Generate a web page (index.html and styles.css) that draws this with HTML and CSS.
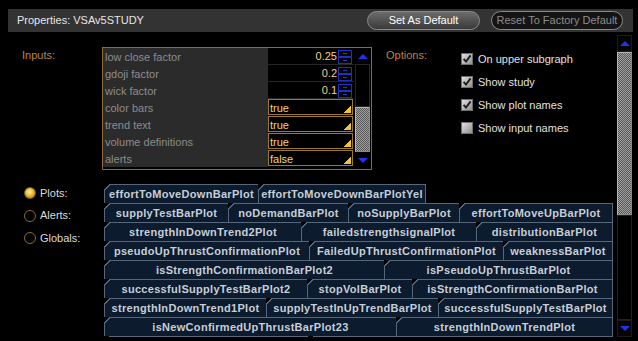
FILE: index.html
```html
<!DOCTYPE html>
<html>
<head>
<meta charset="utf-8">
<title>Properties: VSAv5STUDY</title>
<link rel="stylesheet" href="styles.css">
</head>
<body>
<div class="titlebar">
  <div class="title">Properties: VSAv5STUDY</div>
  <div class="btn btn-primary">Set As Default</div>
  <div class="btn btn-outline">Reset To Factory Default</div>
</div>
<div class="main">
  <div class="content">
    <div class="top">
      <div class="sec-label inputs-label">Inputs:</div>
      <div class="panel">
        <div class="rows">
          <div class="row"><div class="name">low close factor</div><div class="val num">0.25<svg class="spin" width="14" height="14" viewBox="0 0 14 14"><rect x="0.5" y="0.5" width="13" height="6" fill="none" stroke="#1f2fc4"/><rect x="0.5" y="7.5" width="13" height="6" fill="none" stroke="#1f2fc4"/><path d="M5 3.5h4M5 10.5h4" stroke="#2a3ad8"/></svg></div></div>
          <div class="row"><div class="name">gdoji factor</div><div class="val num">0.2<svg class="spin" width="14" height="14" viewBox="0 0 14 14"><rect x="0.5" y="0.5" width="13" height="6" fill="none" stroke="#1f2fc4"/><rect x="0.5" y="7.5" width="13" height="6" fill="none" stroke="#1f2fc4"/><path d="M5 3.5h4M5 10.5h4" stroke="#2a3ad8"/></svg></div></div>
          <div class="row"><div class="name">wick factor</div><div class="val num">0.1<svg class="spin" width="14" height="14" viewBox="0 0 14 14"><rect x="0.5" y="0.5" width="13" height="6" fill="none" stroke="#1f2fc4"/><rect x="0.5" y="7.5" width="13" height="6" fill="none" stroke="#1f2fc4"/><path d="M5 3.5h4M5 10.5h4" stroke="#2a3ad8"/></svg></div></div>
          <div class="row"><div class="name">color bars</div><div class="val"><div class="dd">true</div></div></div>
          <div class="row"><div class="name">trend text</div><div class="val"><div class="dd">true</div></div></div>
          <div class="row"><div class="name">volume definitions</div><div class="val"><div class="dd">true</div></div></div>
          <div class="row"><div class="name">alerts</div><div class="val"><div class="dd">false</div></div></div>
        </div>
        <div class="pscroll">
          <div class="parrow"><svg width="10" height="5" viewBox="0 0 10 5"><path d="M0 5L5 0L10 5Z" fill="#2233f0"/></svg></div>
          <div class="ptrack"></div>
          <div class="thumb pthumb"></div>
          <div class="parrow"><svg width="10" height="5" viewBox="0 0 10 5"><path d="M0 0L5 5L10 0Z" fill="#2233f0"/></svg></div>
        </div>
      </div>
      <div class="sec-label options-label">Options:</div>
      <div class="checks">
        <div class="check-row"><svg class="cb" width="12" height="12" viewBox="0 0 12 12"><defs><linearGradient id="g1" x1="0" y1="0" x2="1" y2="1"><stop offset="0" stop-color="#e4e4e4"/><stop offset="1" stop-color="#8c8c8c"/></linearGradient></defs><rect x="0.5" y="0.5" width="11" height="11" fill="url(#g1)" stroke="#6e6e6e"/><path d="M2.6 5.8L5 8.6L9.6 2.4" fill="none" stroke="#1e1e1e" stroke-width="1.9"/></svg>On upper subgraph</div>
        <div class="check-row"><svg class="cb" width="12" height="12" viewBox="0 0 12 12"><rect x="0.5" y="0.5" width="11" height="11" fill="url(#g1)" stroke="#6e6e6e"/><path d="M2.6 5.8L5 8.6L9.6 2.4" fill="none" stroke="#1e1e1e" stroke-width="1.9"/></svg>Show study</div>
        <div class="check-row"><svg class="cb" width="12" height="12" viewBox="0 0 12 12"><rect x="0.5" y="0.5" width="11" height="11" fill="url(#g1)" stroke="#6e6e6e"/><path d="M2.6 5.8L5 8.6L9.6 2.4" fill="none" stroke="#1e1e1e" stroke-width="1.9"/></svg>Show plot names</div>
        <div class="check-row"><svg class="cb" width="12" height="12" viewBox="0 0 12 12"><rect x="0.5" y="0.5" width="11" height="11" fill="url(#g1)" stroke="#6e6e6e"/></svg>Show input names</div>
      </div>
    </div>
    <div class="bottom">
      <div class="radios">
        <div class="radio-row"><span class="radio on"></span>Plots:</div>
        <div class="radio-row"><span class="radio"></span>Alerts:</div>
        <div class="radio-row"><span class="radio"></span>Globals:</div>
      </div>
      <div class="tabs">
        <div class="trow r1"><div class="tab"><span>effortToMoveDownBarPlot</span></div><div class="tab"><span>effortToMoveDownBarPlotYel</span></div></div>
        <div class="trow r2"><div class="tab"><span>supplyTestBarPlot</span></div><div class="tab"><span>noDemandBarPlot</span></div><div class="tab"><span>noSupplyBarPlot</span></div><div class="tab"><span>effortToMoveUpBarPlot</span></div></div>
        <div class="trow r3"><div class="tab"><span>strengthInDownTrend2Plot</span></div><div class="tab"><span>failedstrengthsignalPlot</span></div><div class="tab"><span>distributionBarPlot</span></div></div>
        <div class="trow r4"><div class="tab"><span>pseudoUpThrustConfirmationPlot</span></div><div class="tab"><span>FailedUpThrustConfirmationPlot</span></div><div class="tab"><span>weaknessBarPlot</span></div></div>
        <div class="trow r5"><div class="tab"><span>isStrengthConfirmationBarPlot2</span></div><div class="tab"><span>isPseudoUpThrustBarPlot</span></div></div>
        <div class="trow r6"><div class="tab"><span>successfulSupplyTestBarPlot2</span></div><div class="tab"><span>stopVolBarPlot</span></div><div class="tab"><span>isStrengthConfirmationBarPlot</span></div></div>
        <div class="trow r7"><div class="tab"><span>strengthInDownTrend1Plot</span></div><div class="tab"><span>supplyTestInUpTrendBarPlot</span></div><div class="tab"><span>successfulSupplyTestBarPlot</span></div></div>
        <div class="trow r8"><div class="tab"><span>isNewConfirmedUpThrustBarPlot23</span></div><div class="tab"><span>strengthInDownTrendPlot</span></div></div>
        <div class="trow r9"><div class="tab"><span></span></div><div class="tab"><span></span></div></div>
      </div>
    </div>
  </div>
  <div class="vscroll">
    <div class="varrow"><svg width="10" height="5" viewBox="0 0 10 5"><path d="M0 5L5 0L10 5Z" fill="#2233f0"/></svg></div>
    <div class="thumb vthumb"></div>
    <div class="vtrack"></div>
    <div class="varrow"><svg width="10" height="5" viewBox="0 0 10 5"><path d="M0 0L5 5L10 0Z" fill="#2233f0"/></svg></div>
  </div>
</div>
</body>
</html>
```

FILE: styles.css
```css
* { box-sizing: border-box; margin: 0; padding: 0; }
html, body { background: #000; }
body {
  width: 638px;
  height: 341px;
  overflow: hidden;
  font-family: "Liberation Sans", Arial, sans-serif;
  font-size: 11px;
  line-height: 13px;
  color: #dcdcdc;
}

/* title bar */
.titlebar {
  margin: 9px 5px 0 8px;
  height: 23px;
  background: #333;
  display: flex;
  align-items: center;
  padding: 0 10px 0 9px;
}
.title { flex: 1; color: #e6e6e6; }
.btn {
  height: 19px;
  border-radius: 10px;
  display: flex;
  align-items: center;
  justify-content: center;
}
.btn-primary {
  width: 113px;
  background: linear-gradient(#6c6c6c, #3a3a3a);
  border: 1px solid #8a8a8a;
  color: #fff;
}
.btn-outline {
  width: 132px;
  margin-left: 11px;
  border: 1px solid #8a8a8a;
  background: #141414;
  color: #8c8c8c;
}

/* main */
.main { display: flex; height: 309px; }
.content { width: 617px; }

.top { display: flex; margin-top: 15px; height: 123px; }
.sec-label { color: #b8844c; padding-top: 2px; }
.inputs-label { width: 102px; padding-left: 22px; }
.options-label { width: 89px; padding-left: 14px; }

.panel {
  width: 270px;
  height: 123px;
  border: 1px solid #8a6a3a;
  display: flex;
}
.rows { width: 251px; }
.row { display: flex; height: 17px; }
.name {
  width: 165px;
  background: #2b2b2b;
  color: #8c8c8c;
  padding: 2px 0 0 2px;
  line-height: 15px;
  white-space: nowrap;
}
.val { width: 86px; background: #000; color: #f2d27c; }
.num {
  display: flex;
  justify-content: flex-end;
  align-items: center;
  padding-top: 1px;
  border-bottom: 1px solid #262626;
}
.spin { margin: 0 2px 0 1px; display: block; }
.dd {
  width: 85px;
  height: 16px;
  border: 1px solid #9a7830;
  padding: 1px 0 0 1px;
  line-height: 14px;
  background: linear-gradient(to top left, #f2c428 5px, transparent 5px) no-repeat right 1px bottom 1px / 8px 8px, #000;
}

.pscroll { width: 17px; display: flex; flex-direction: column; padding: 0 1px 0 1px; }
.parrow {
  height: 16px;
  display: flex;
  align-items: center;
  justify-content: center;
}
.parrow svg { display: block; }
.ptrack { height: 43px; border: 1px solid #262626; }
.thumb {
  background: repeating-conic-gradient(#a0a0a0 0 25%, #585858 0 50%) 0 0 / 2px 2px;
  border: 1px solid #8a8a8a;
  border-top-color: #b4b4b4;
  border-left-color: #b4b4b4;
}
.pthumb { height: 45px; }

.checks { display: flex; flex-direction: column; }
.check-row {
  height: 23px;
  display: flex;
  align-items: center;
  padding-top: 1px;
  color: #e0e0e0;
}
.cb { display: block; margin-right: 5px; }

/* bottom */
.bottom { display: flex; margin-top: 14px; }
.radios {
  width: 104px;
  padding: 1px 0 0 24px;
  display: flex;
  flex-direction: column;
  gap: 6.5px;
}
.radio-row { height: 16px; display: flex; align-items: center; color: #dcdcdc; }
.radio {
  width: 12px;
  height: 12px;
  border-radius: 50%;
  border: 1.5px solid #8c6a28;
  background: #000;
  margin-right: 4px;
}
.radio.on {
  border: 1px solid #7a5818;
  background: radial-gradient(circle at 45% 40%, #fff0a8 0, #f2c648 35%, #c8901c 75%, #8a6010 100%);
}

.tabs { width: 509px; height: 153px; overflow: hidden; }
.trow { display: grid; height: 19px; }
.r1 { grid-template-columns: 154px 168px; }
.r2 { grid-template-columns: 124px 120px 111px 154px; }
.r3 { grid-template-columns: 197px 175px 137px; }
.r4 { grid-template-columns: 205px 194px 110px; }
.r5 { grid-template-columns: 280px 229px; }
.r6 { grid-template-columns: 203px 105px 201px; }
.r7 { grid-template-columns: 162px 172px 175px; }
.r8 { grid-template-columns: 292px 217px; }
.r9 { grid-template-columns: 204px 305px; }
.tab {
  background: linear-gradient(135deg, transparent 4px, #56677a 4px);
  padding: 1px 0 0 1px;
}
.tab:last-child { padding-right: 1px; }
.tab span {
  display: block;
  height: 18px;
  background: linear-gradient(135deg, transparent 4px, #0c1b2d 4px);
  text-align: center;
  line-height: 19px;
  color: #c6ced8;
  font-weight: bold;
  letter-spacing: 0.3px;
  white-space: nowrap;
  overflow: hidden;
}

/* main scrollbar */
.vscroll {
  width: 15px;
  margin-top: 3px;
  height: 302px;
  display: flex;
  flex-direction: column;
}
.varrow {
  height: 17px;
  display: flex;
  align-items: center;
  justify-content: center;
  border: 1px solid #1c1c1c;
  background: #050505;
}
.varrow svg { display: block; }
.vthumb { height: 163px; }
.vtrack { height: 105px; border: 1px solid #222; }
```
